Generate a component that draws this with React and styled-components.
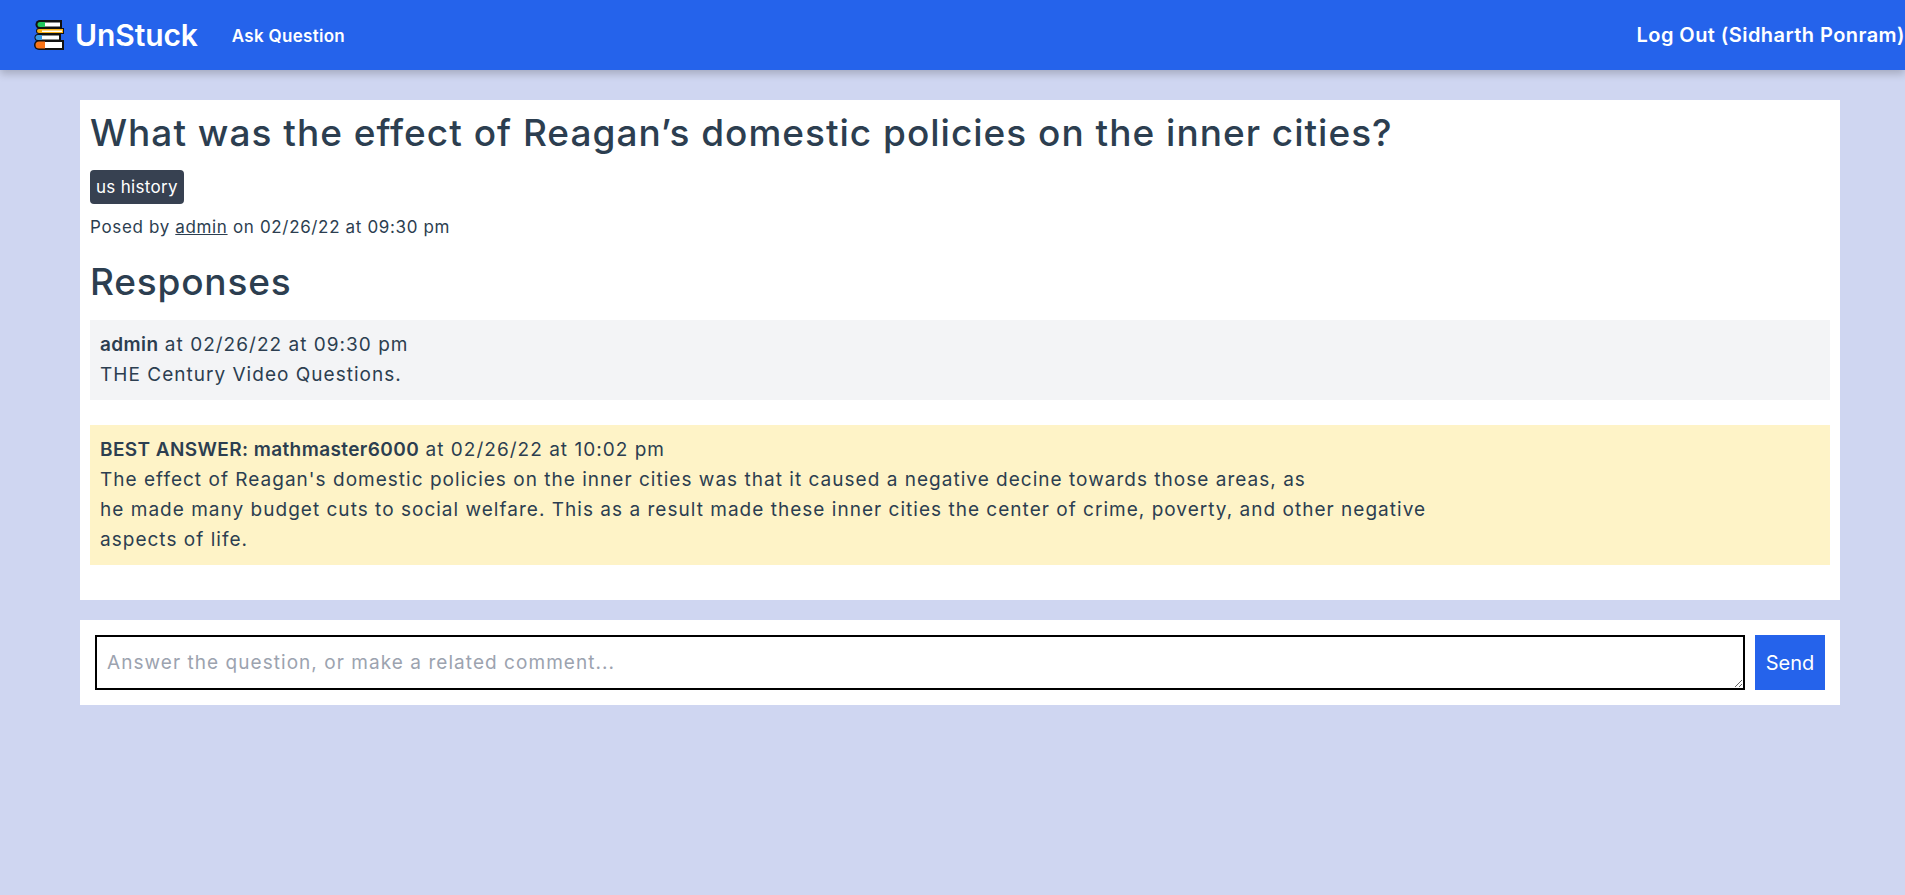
import styled, { createGlobalStyle } from "styled-components";

const GlobalStyle = createGlobalStyle`
  html, body {
    margin: 0;
    padding: 0;
    min-height: 100%;
    background-color: #cfd6f1;
    color: #2c3e50;
    font-family: "Inter", "Noto Sans", sans-serif;
  }
  * {
    box-sizing: border-box;
  }
`;

const Page = styled.div`
  min-height: 895px;
  background-color: #cfd6f1;
`;

const Navbar = styled.nav`
  height: 70px;
  display: flex;
  align-items: center;
  justify-content: space-between;
  background-color: #2563eb;
  color: white;
  box-shadow: 0 4px 8px rgba(0, 0, 0, 0.2);
`;

const NavLeft = styled.div`
  display: flex;
  align-items: center;
  padding-left: 34px;
`;

const Brand = styled.a`
  font-size: 30px;
  font-weight: 600;
  letter-spacing: -0.1px;
  margin-left: 11px;
  color: white;
`;

const NavLink = styled.a`
  font-size: ${(props) => props.$size}px;
  font-weight: 600;
  letter-spacing: ${(props) => props.$spacing}px;
  white-space: nowrap;
  color: white;
  margin-left: ${(props) => props.$gap || 0}px;
  padding-top: ${(props) => props.$drop || 0}px;
`;

const Main = styled.main`
  padding: 30px 65px 0 80px;
  display: flex;
  flex-direction: column;
  gap: 20px;
`;

const Card = styled.section`
  background-color: white;
  padding: 10px 10px 35px;
`;

const Title = styled.h1`
  margin: 0;
  font-size: 37px;
  line-height: 46px;
  font-weight: 500;
  letter-spacing: 1px;
`;

const Tag = styled.span`
  display: inline-block;
  margin-top: 14px;
  padding: 0 6px;
  height: 34px;
  line-height: 34px;
  border-radius: 4px;
  background-color: #374151;
  color: white;
  font-size: 17px;
  letter-spacing: 0.3px;
`;

const Meta = styled.p`
  margin: 11px 0 0;
  font-size: 17px;
  line-height: 24px;
  letter-spacing: 0.65px;

  & a {
    color: inherit;
    text-decoration: underline;
  }
`;

const SectionTitle = styled.h2`
  margin: 19px 0 0;
  font-size: 37px;
  line-height: 48px;
  font-weight: 500;
  letter-spacing: 0.8px;
`;

const Response = styled.article`
  margin-top: ${(props) => props.$top}px;
  padding: 10px;
  background-color: ${(props) => (props.$best ? "#fef3c7" : "#f3f4f6")};
  font-size: 19px;
  line-height: 30px;
  letter-spacing: 1.02px;

  & strong {
    font-weight: 600;
    letter-spacing: 0.4px;
  }
`;

const ReplyForm = styled.form`
  display: flex;
  gap: 10px;
  padding: 15px;
  background-color: white;
`;

const ReplyInput = styled.textarea`
  flex: 1;
  height: 55px;
  padding: 13px 10px;
  border: 2px solid black;
  border-radius: 0;
  outline: none;
  font-family: inherit;
  font-size: 19px;
  line-height: 26px;
  letter-spacing: 1.05px;
  color: #2c3e50;

  &::placeholder {
    color: #9ca3af;
  }
`;

const SendButton = styled.button`
  width: 70px;
  height: 55px;
  border: none;
  background-color: #2563eb;
  color: white;
  font-family: inherit;
  font-size: 20px;
`;

function BooksLogo() {
  return (
    <svg width="30" height="30" viewBox="0 0 30 30">
      <path d="M6 0h22v9H6a4.5 4.5 0 0 1 0-9z" fill="#111" />
      <path d="M6 2h5v5H6a2.5 2.5 0 0 1 0-5z" fill="#22c55e" />
      <rect x="11" y="2.5" width="15" height="4" fill="#fff" />
      <path d="M5 8h25v6H5a3 3 0 0 1 0-6z" fill="#111" />
      <path d="M5 9h24v4H5a2 2 0 0 1 0-4z" fill="#fbb117" />
      <rect x="8" y="10.5" width="20" height="1.5" fill="#fff" />
      <path d="M4 14h23v7H4a3.5 3.5 0 0 1 0-7z" fill="#111" />
      <path d="M4 15h4v5H4a2.5 2.5 0 0 1 0-5z" fill="#3b9ae1" />
      <rect x="8" y="15.5" width="17" height="4" fill="#fff" />
      <path d="M5 20h25v10H5a5 5 0 0 1 0-10z" fill="#111" />
      <path d="M5 21.5h6v7H5a3.5 3.5 0 0 1 0-7z" fill="#f97316" />
      <rect x="11" y="22" width="17" height="6" fill="#fff" />
    </svg>
  );
}

export default function App() {
  return (
    <Page>
      <GlobalStyle />
      <Navbar>
        <NavLeft>
          <BooksLogo />
          <Brand>UnStuck</Brand>
          <NavLink $size={17} $spacing={0.3} $gap={34} $drop={2}>Ask Question</NavLink>
        </NavLeft>
        <NavLink $size={20} $spacing={0.45}>Log Out (Sidharth Ponram)</NavLink>
      </Navbar>
      <Main>
        <Card>
          <Title>What was the effect of Reagan’s domestic policies on the inner cities?</Title>
          <Tag>us history</Tag>
          <Meta>
            Posed by <a href="#admin">admin</a> on 02/26/22 at 09:30 pm
          </Meta>
          <SectionTitle>Responses</SectionTitle>
          <Response $top={14}>
            <strong>admin</strong> at 02/26/22 at 09:30 pm
            <br />
            THE Century Video Questions.
          </Response>
          <Response $top={25} $best>
            <strong>BEST ANSWER: mathmaster6000</strong> at 02/26/22 at 10:02 pm
            <br />
            The effect of Reagan's domestic policies on the inner cities was that it caused a negative decine towards those areas, as
            <br />
            he made many budget cuts to social welfare. This as a result made these inner cities the center of crime, poverty, and other negative
            <br />
            aspects of life.
          </Response>
        </Card>
        <ReplyForm>
          <ReplyInput placeholder="Answer the question, or make a related comment..." />
          <SendButton type="button">Send</SendButton>
        </ReplyForm>
      </Main>
    </Page>
  );
}
